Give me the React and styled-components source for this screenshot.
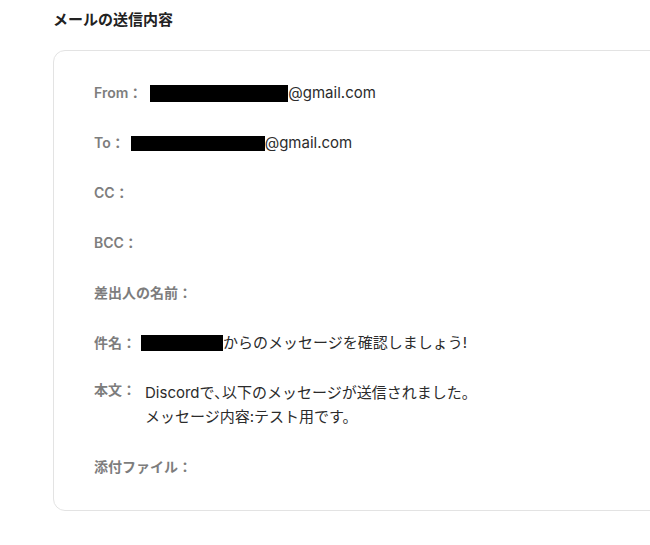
import React from "react";
import styled, { createGlobalStyle } from "styled-components";

const GlobalStyle = createGlobalStyle`
  body {
    margin: 0;
    background: #fff;
    font-family: Inter, "Noto Sans CJK JP", sans-serif;
  }
`;

const Page = styled.div`
  padding: 10px 0 0 53px;
  overflow: hidden;
  width: 650px;
  box-sizing: border-box;
`;

const Title = styled.h2`
  margin: 0;
  font-size: 15px;
  line-height: 20px;
  font-weight: 700;
  color: #222;
`;

const Card = styled.div`
  margin-top: 20px;
  width: 640px;
  border: 1px solid #e3e3e3;
  border-radius: 12px;
  padding: 30px 40px 31px;
  box-sizing: border-box;
  display: flex;
  flex-direction: column;
  gap: 26px;
`;

const Row = styled.div`
  display: flex;
  align-items: flex-start;
  height: ${p => (p.$lines || 1) * 24}px;
`;

const Label = styled.span`
  color: #7d7d7d;
  font-weight: 600;
  font-size: 14px;
  line-height: 24px;
  white-space: nowrap;
  margin-right: ${p => p.$gap}px;
  margin-top: ${p => (p.$raised ? "-3px" : "0")};
`;

const Value = styled.div`
  color: #2b2b2b;
  font-size: 15px;
  display: flex;
  flex-direction: column;
`;

const Line = styled.span`
  display: flex;
  align-items: center;
  height: 24px;
  line-height: 24px;
  white-space: nowrap;
`;

const Redact = styled.span`
  display: inline-block;
  background: #000;
  width: ${p => p.$w}px;
  height: ${p => p.$h || 16}px;
`;

const rows = [
  { label: "From：", gap: 8, value: [<Line key="a"><Redact $w={138} $h={17} />@gmail.com</Line>] },
  { label: "To：", gap: 6, value: [<Line key="a"><Redact $w={134} $h={15} />@gmail.com</Line>] },
  { label: "CC：" },
  { label: "BCC：" },
  { label: "差出人の名前：" },
  { label: "件名：", gap: 5, value: [<Line key="a"><Redact $w={82} $h={16} />からのメッセージを確認しましょう!</Line>] },
  {
    label: "本文：",
    gap: 9,
    raised: true,
    lines: 2,
    value: [
      <Line key="a">Discordで､以下のメッセージが送信されました。</Line>,
      <Line key="b">メッセージ内容:テスト用です。</Line>,
    ],
  },
  { label: "添付ファイル：" },
];

export default function App() {
  return (
    <Page>
      <GlobalStyle />
      <Title>メールの送信内容</Title>
      <Card>
        {rows.map(r => (
          <Row key={r.label} $lines={r.lines}>
            <Label $raised={r.raised} $gap={r.gap || 0}>{r.label}</Label>
            {r.value && <Value>{r.value}</Value>}
          </Row>
        ))}
      </Card>
    </Page>
  );
}
